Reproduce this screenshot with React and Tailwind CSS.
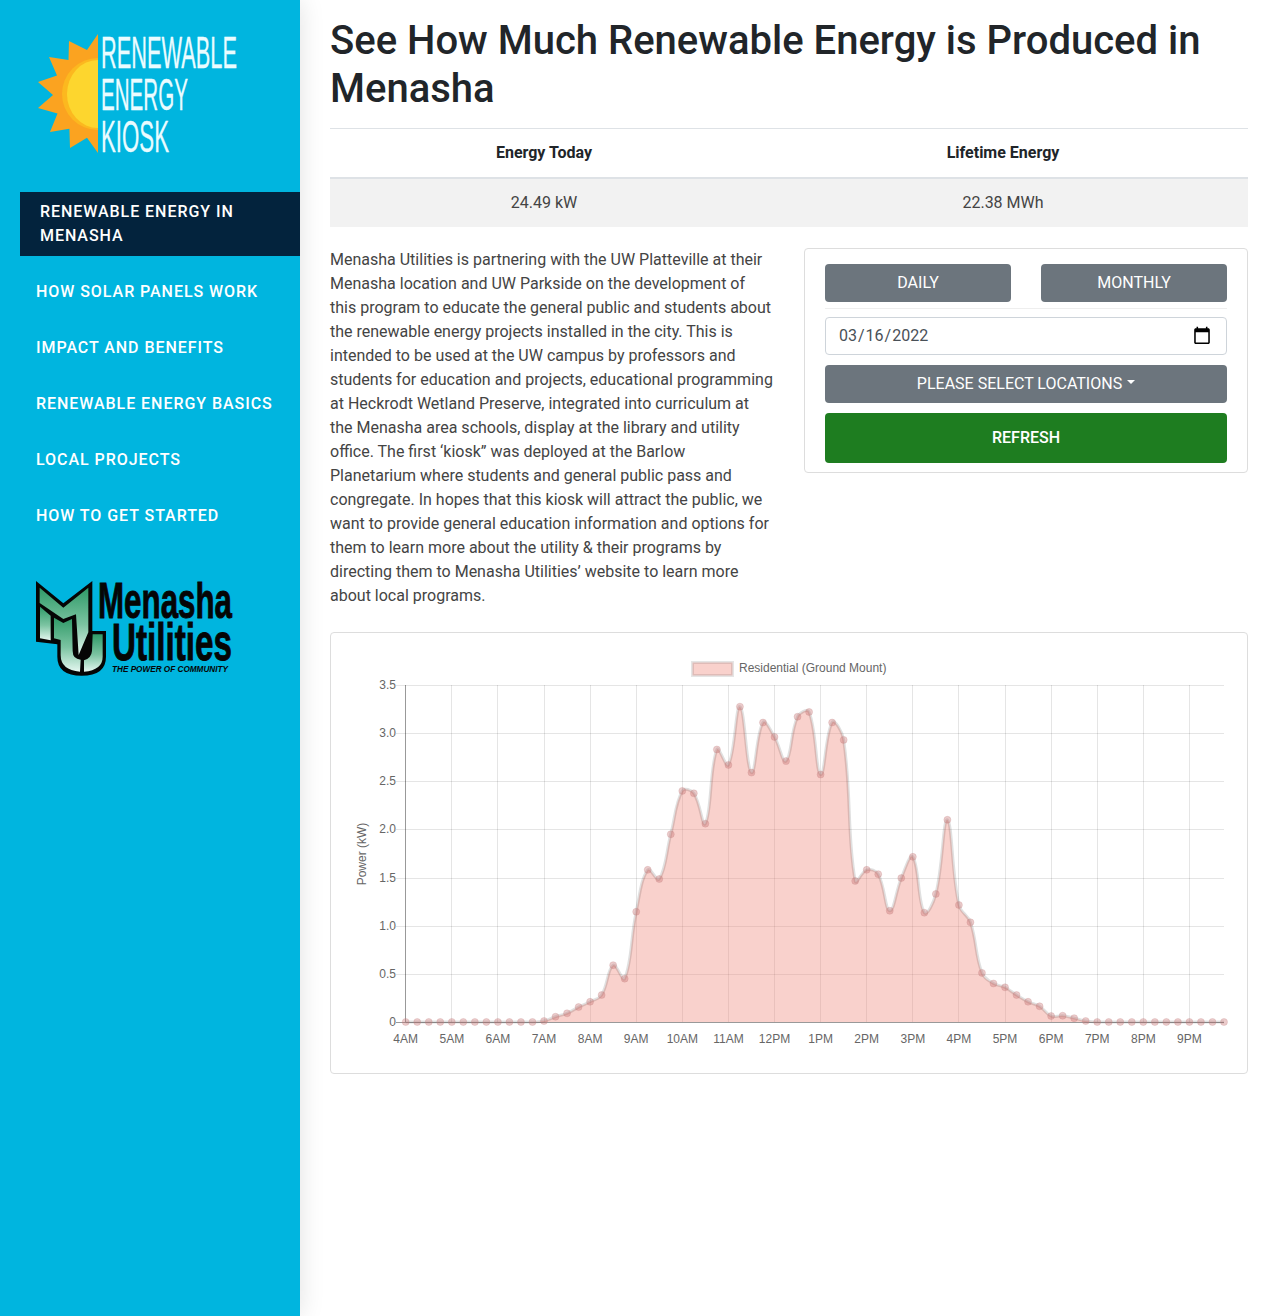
import React from 'react';

const navItems = [
  'How solar panels work',
  'Impact and benefits',
  'Renewable energy basics',
  'Local projects',
  'How to get started',
];

// kW readings, one every 15 minutes from 4AM
const readings = [
  0, 0, 0, 0, 0, 0, 0, 0, 0, 0, 0, 0, 0.01, 0.055, 0.09, 0.155, 0.21, 0.28, 0.59, 0.45, 1.145, 1.58, 1.485, 1.95,
  2.4, 2.375, 2.06, 2.83, 2.67, 3.275, 2.59, 3.11, 2.96, 2.71, 3.17, 3.22, 2.57, 3.11, 2.93, 1.465, 1.58, 1.535,
  1.155, 1.495, 1.715, 1.135, 1.33, 2.1, 1.215, 1.035, 0.51, 0.4, 0.36, 0.28, 0.21, 0.163, 0.062, 0.065, 0.04,
  0.01, 0, 0, 0, 0, 0, 0, 0, 0, 0, 0, 0, 0,
];

const hours = ['4AM', '5AM', '6AM', '7AM', '8AM', '9AM', '10AM', '11AM', '12PM', '1PM', '2PM', '3PM', '4PM', '5PM', '6PM', '7PM', '8PM', '9PM'];
const yTicks = ['0', '0.5', '1.0', '1.5', '2.0', '2.5', '3.0', '3.5'];

const left = 405.7;
const right = 1224;
const top = 685;
const bottom = 1022;
const stepX = (right - left) / 71;
const toY = (v) => bottom - (v / 3.5) * (bottom - top);

const points = readings.map((v, i) => ({ x: left + i * stepX, y: toY(v) }));

// same curve as a chart.js line with tension 0.4
function buildLine(pts) {
  const tension = 0.4;
  const ctrl = pts.map((p, i) => {
    const prev = pts[i - 1] || p;
    const next = pts[i + 1] || p;
    const d01 = Math.hypot(p.x - prev.x, p.y - prev.y);
    const d12 = Math.hypot(next.x - p.x, next.y - p.y);
    const sum = d01 + d12 || 1;
    const fa = (tension * d01) / sum;
    const fb = (tension * d12) / sum;
    return {
      px: p.x - fa * (next.x - prev.x),
      py: Math.min(bottom, p.y - fa * (next.y - prev.y)),
      nx: p.x + fb * (next.x - prev.x),
      ny: Math.min(bottom, p.y + fb * (next.y - prev.y)),
    };
  });
  let d = `M${pts[0].x} ${pts[0].y}`;
  for (let i = 1; i < pts.length; i++) {
    d += ` C${ctrl[i - 1].nx} ${ctrl[i - 1].ny} ${ctrl[i].px} ${ctrl[i].py} ${pts[i].x} ${pts[i].y}`;
  }
  return d;
}

const linePath = buildLine(points);

function KioskLogo() {
  return (
    <svg viewBox="0 0 300 192" className="block w-[300px] h-[192px]">
      <polygon
        fill="#fba320"
        points="98,34 87,50 69,41 68.5,60 49,57 57,75.6 38,82 53,95 38,108 57.5,113.5 50,132 69.4,128.7 70,148 87,137.7 98,153"
      />
      <path d="M98 58 A36 36 0 0 0 98 130 Z" fill="#fcb81f" />
      <path d="M98 60 A31 34 0 0 0 98 128 Z" fill="#fdd62e" />
      <g fill="#eafcff" stroke="#eafcff" strokeWidth="0.3" strokeLinejoin="round" fontFamily="'Liberation Sans', sans-serif" fontSize="44">
        <text x="101" y="68" textLength="136" lengthAdjust="spacingAndGlyphs">RENEWABLE</text>
        <text x="101" y="110" textLength="87" lengthAdjust="spacingAndGlyphs">ENERGY</text>
        <text x="101" y="152" textLength="68" lengthAdjust="spacingAndGlyphs">KIOSK</text>
      </g>
    </svg>
  );
}

function UtilitiesLogo() {
  return (
    <svg viewBox="30 575 210 105" className="block w-[210px] h-[105px]">
      <defs>
        <linearGradient id="muGreen" x1="0" y1="0" x2="0" y2="1">
          <stop offset="0" stopColor="#2f9a68" />
          <stop offset="0.55" stopColor="#7cc4a2" />
          <stop offset="1" stopColor="#e4f7f0" />
        </linearGradient>
      </defs>
      <g transform="translate(30 575) scale(0.3333)">
        <path
          d="M18 18 L100 85 L187 18 L187 168 L228 168 L228 245 Q228 302 155 302 Q82 302 82 245 L82 208 L18 200 Z"
          fill="#050505"
        />
        <path fill="url(#muGreen)" d="M29 38 L100 98 L175 38 L175 172 L146 240 L138 118 L100 132 L29 84 Z" />
        <path fill="url(#muGreen)" d="M30 95 L62 122 L62 196 L30 190 Z" />
        <path fill="url(#muGreen)" d="M72 128 L100 144 L126 132 L128 228 Q128 252 152 254 L150 290 Q92 285 92 240 L92 195 L72 190 Z" />
        <path fill="url(#muGreen)" d="M188 178 L218 178 L218 245 Q218 285 162 290 L162 256 Q184 250 186 228 Z" />
      </g>
      <g fill="#050505" stroke="#050505" fontFamily="'Liberation Sans', sans-serif" fontWeight="700">
        <text x="98" y="618" fontSize="50" strokeWidth="0.9" textLength="134" lengthAdjust="spacingAndGlyphs">Menasha</text>
        <text x="112" y="660" fontSize="52" strokeWidth="0.9" textLength="120" lengthAdjust="spacingAndGlyphs">Utilities</text>
        <text x="112" y="672" fontSize="9" strokeWidth="0" fontStyle="italic" textLength="116" lengthAdjust="spacingAndGlyphs">THE POWER OF COMMUNITY</text>
      </g>
    </svg>
  );
}

function PowerChart() {
  return (
    <svg viewBox="331 633 916 440" className="block w-[916px] h-[440px]">
      <g fontFamily="'Liberation Sans', Arial, sans-serif" fontSize="12" fill="#666666">
        {/* legend */}
        <rect x="692.5" y="662.5" width="40" height="13" fill="rgba(240,135,122,0.38)" stroke="rgba(0,0,0,0.1)" strokeWidth="3" />
        <text x="739" y="672">Residential (Ground Mount)</text>

        {/* grid */}
        {yTicks.map((label, i) => {
          const y = Math.round(toY(i * 0.5)) + 0.5;
          return (
            <g key={label}>
              <line x1="396" x2={right} y1={y} y2={y} stroke={i === 0 ? 'rgba(0,0,0,0.4)' : 'rgba(0,0,0,0.1)'} />
              <text x="396" y={y + 3} textAnchor="end">{label}</text>
            </g>
          );
        })}
        {hours.map((label, i) => {
          const hx = left + i * 4 * stepX;
          const x = Math.floor(hx) + 0.5;
          return (
            <g key={label}>
              <line x1={x} x2={x} y1={top} y2={bottom} stroke={i === 0 ? 'rgba(0,0,0,0.4)' : 'rgba(0,0,0,0.1)'} />
              <text x={hx} y="1043" textAnchor="middle">{label}</text>
            </g>
          );
        })}
        <text transform="translate(366 854) rotate(-90)" textAnchor="middle">Power (kW)</text>

        {/* data */}
        <path d={`${linePath} L${right} ${bottom} L${left} ${bottom} Z`} fill="rgba(240,135,122,0.38)" />
        <path d={linePath} fill="none" stroke="rgba(0,0,0,0.12)" strokeWidth="3" />
        {points.map((p, i) => (
          <circle key={i} cx={p.x} cy={p.y} r="3.5" fill="rgba(200,110,110,0.36)" stroke="rgba(190,130,130,0.25)" />
        ))}
      </g>
    </svg>
  );
}

export default function App() {
  return (
    <div className="flex min-h-screen bg-white font-['Roboto',sans-serif] text-[#212529]">
      <aside className="w-[300px] shrink-0 bg-[#00b5df] shadow-[0_0_24px_rgba(0,0,0,0.12)] z-10">
        <KioskLogo />
        <nav className="text-white font-medium uppercase tracking-[0.95px]">
          <a className="block ml-5 pl-5 pr-4 py-2 mb-[8px] bg-[#03233d] leading-6">Renewable energy in Menasha</a>
          {navItems.map((item) => (
            <a key={item} className="block pl-9 py-4 leading-6">{item}</a>
          ))}
        </nav>
        <div className="mt-[31px] pl-[30px]">
          <UtilitiesLogo />
        </div>
      </aside>

      <main className="flex-1 min-w-0 pl-[30px] pr-[28px] pt-[17px]">
        <h1 className="text-[40px] leading-[48px] font-medium mb-[15px]">
          See How Much Renewable Energy is Produced in Menasha
        </h1>

        <table className="w-full table-fixed mb-[21px] text-center">
          <colgroup>
            <col className="w-[428px]" />
            <col />
          </colgroup>
          <thead>
            <tr className="border-t border-[#dee2e6] border-b-2">
              <th className="p-3 leading-6 font-bold">Energy Today</th>
              <th className="p-3 leading-6 font-bold">Lifetime Energy</th>
            </tr>
          </thead>
          <tbody>
            <tr className="bg-[#f2f2f2] text-[#444444]">
              <td className="p-3 leading-6">24.49 kW</td>
              <td className="p-3 leading-6">22.38 MWh</td>
            </tr>
          </tbody>
        </table>

        <div className="grid grid-cols-2 gap-[30px] mb-[24px]">
          <p className="leading-6 text-[#444444]">
            Menasha Utilities is partnering with the UW Platteville at their Menasha location and UW Parkside on the
            development of this program to educate the general public and students about the renewable energy projects
            installed in the city. This is intended to be used at the UW campus by professors and students for education
            and projects, educational programming at Heckrodt Wetland Preserve, integrated into curriculum at the Menasha
            area schools, display at the library and utility office. The first ‘kiosk” was deployed at the Barlow
            Planetarium where students and general public pass and congregate. In hopes that this kiosk will attract the
            public, we want to provide general education information and options for them to learn more about the utility
            &amp; their programs by directing them to Menasha Utilities’ website to learn more about local programs.
          </p>

          <div className="self-start border border-[#dddddd] rounded px-5 pt-[15px] pb-[9px]">
            <div className="grid grid-cols-2 gap-[30px] pb-[6px] border-b border-[#eeeeee]">
              <button className="h-[38px] rounded bg-[#6c757d] text-white uppercase">Daily</button>
              <button className="h-[38px] rounded bg-[#6c757d] text-white uppercase">Monthly</button>
            </div>
            <input
              type="date"
              defaultValue="2022-03-16"
              className="block w-full h-[38px] mt-2 pl-[12px] pr-[14px] border border-[#ced4da] rounded text-[#495057] bg-white [&::-webkit-calendar-picker-indicator]:scale-125"
            />
            <button className="flex items-center justify-center w-full h-[38px] mt-[10px] rounded bg-[#6c757d] text-white uppercase">
              Please select locations
              <span className="ml-[5px] -translate-y-[2px] border-x-[4.8px] border-x-transparent border-t-[4.8px] border-t-white" />
            </button>
            <button className="block w-full h-[50px] mt-[10px] rounded bg-[#1e7d20] text-white font-medium uppercase">
              Refresh
            </button>
          </div>
        </div>

        <div className="border border-[#dddddd] rounded">
          <PowerChart />
        </div>
      </main>
    </div>
  );
}
